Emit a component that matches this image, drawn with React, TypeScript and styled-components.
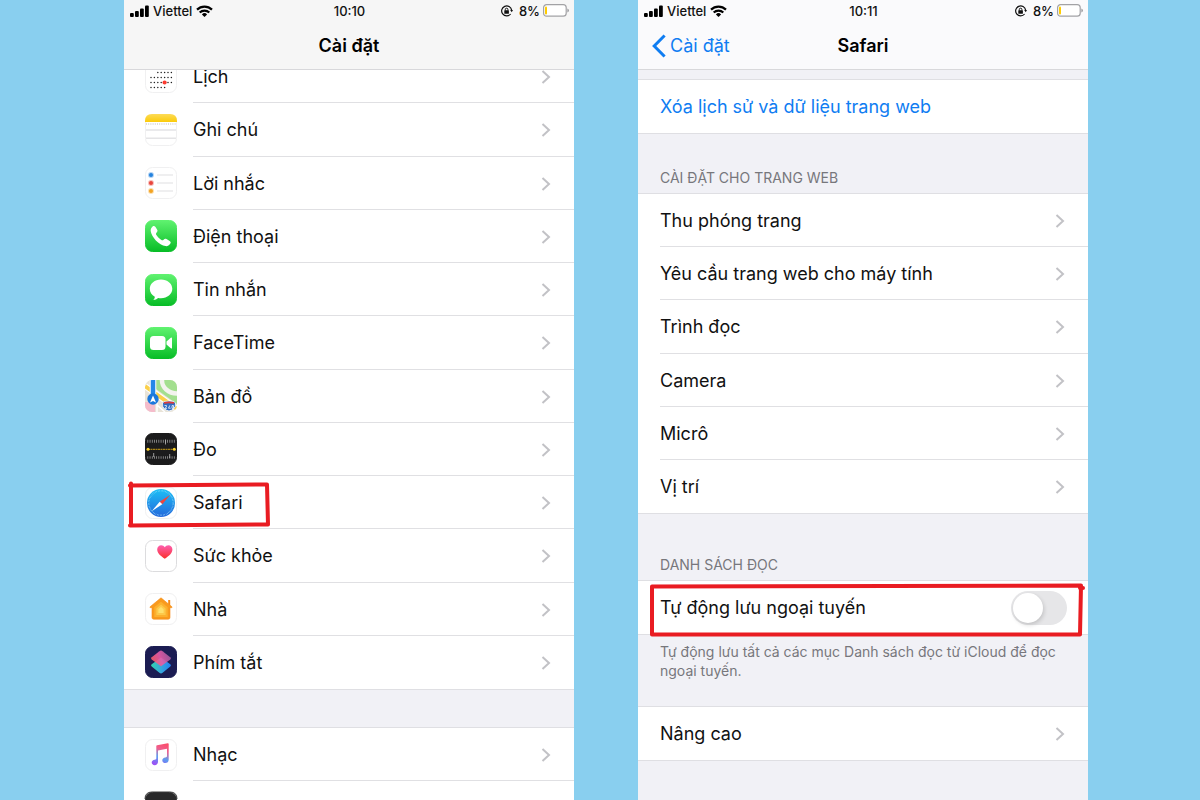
import React from 'react';
import styled, { createGlobalStyle } from 'styled-components';

const GlobalStyle = createGlobalStyle`
  *, *::before, *::after { box-sizing: border-box; }
  body {
    margin: 0;
    background: #89cfef;
    color: #111;
    font-family: Inter, Roboto, "Liberation Sans", sans-serif;
  }
  ul { list-style: none; margin: 0; padding: 0; }
  h1, h2, p { margin: 0; }
`;

const Stage = styled.main`
  display: flex;
  justify-content: center;
  gap: 64px;
  height: 100vh;
  padding-left: 12px;
  overflow: hidden;
`;

const Phone = styled.section`
  flex: 0 1 450px;
  min-width: 0;
  background: #f1f1f6;
  overflow: hidden;
`;

const Header = styled.header<{ $tint: string }>`
  position: relative;
  z-index: 1;
  background: ${(p) => p.$tint};
  border-bottom: 1px solid #d8d8db;
`;

const StatusBar = styled.div`
  display: grid;
  grid-template-columns: 1fr auto 1fr;
  align-items: center;
  height: 21px;
  padding: 0 5px 0 6px;
  font-size: 13px;
  font-weight: 500;
  line-height: 20px;
`;

const StatusSide = styled.div<{ $end?: boolean }>`
  display: flex;
  align-items: center;
  justify-content: ${(p) => (p.$end ? 'flex-end' : 'flex-start')};
  gap: ${(p) => (p.$end ? 3 : 4)}px;
`;

const Charge = styled.span`
  padding-left: 3px;
`;

const NavBar = styled.div`
  display: grid;
  grid-template-columns: 1fr auto 1fr;
  align-items: center;
  height: 48px;
  padding: 2px 14px 0;
`;

const Title = styled.h1`
  grid-column: 2;
  font-size: 18px;
  font-weight: 600;
  line-height: 24px;
  color: #000;
`;

const BackButton = styled.button`
  display: flex;
  align-items: center;
  justify-self: start;
  gap: 4px;
  padding: 0;
  border: 0;
  background: none;
  color: #0f7df2;
  font: inherit;
  font-size: 18px;
  line-height: 24px;
`;

const Group = styled.ul<{ $gap?: number; $height?: number }>`
  display: grid;
  grid-auto-rows: minmax(53px, 1fr);
  margin-top: ${(p) => p.$gap ?? 0}px;
  min-height: ${(p) => p.$height ?? 0}px;
  background: #fff;
  border: solid #dfdfe3;
  border-width: 1px 0;
`;

const Item = styled.li`
  position: relative;
  display: flex;
`;

const RowLink = styled.a<{ $accent?: boolean; $icon?: boolean }>`
  flex: 1;
  display: flex;
  align-items: center;
  gap: 16px;
  padding-left: ${(p) => (p.$icon ? 21 : 22)}px;
  min-width: 0;
  color: ${(p) => (p.$accent ? '#0f7df2' : '#111')};
  font-size: 18px;
  line-height: 24px;
  text-decoration: none;
`;

const RowBody = styled.span`
  flex: 1;
  align-self: stretch;
  display: flex;
  align-items: center;
  justify-content: space-between;
  padding: 2px 23px 0 0;
  border-bottom: 1px solid #e0e0e3;
  ${Item}:last-child & { border-bottom-color: transparent; }
`;

const SwitchRow = styled.label`
  flex: 1;
  display: flex;
  align-items: center;
  justify-content: space-between;
  padding: 0 21px 0 22px;
  font-size: 18px;
  line-height: 24px;
`;

const Switch = styled.input`
  appearance: none;
  width: 56px;
  height: 34px;
  margin: 0;
  padding: 2px;
  border-radius: 17px;
  background: #e6e6e8;
  &::before {
    content: "";
    display: block;
    width: 30px;
    height: 30px;
    border-radius: 50%;
    background: #fff;
    box-shadow: 1px 2px 4px rgba(0, 0, 0, 0.16);
  }
  &:checked { background: #34c759; }
  &:checked::before { margin-left: 22px; }
`;

const SectionLabel = styled.h2<{ $space: number }>`
  padding: ${(p) => p.$space}px 22px 5px;
  color: #77777c;
  font-size: 14px;
  font-weight: 400;
  line-height: 20px;
`;

const Footnote = styled.p`
  padding: 7px 30px 26px 22px;
  color: #77777c;
  font-size: 14px;
  line-height: 19px;
`;

const MarkSvg = styled.svg<{ $wide?: boolean }>`
  position: absolute;
  z-index: 1;
  left: ${(p) => (p.$wide ? 10 : 3)}px;
  top: ${(p) => (p.$wide ? 1 : 5)}px;
  width: ${(p) => (p.$wide ? 'calc(100% - 12px)' : '144px')};
  height: ${(p) => (p.$wide ? 56 : 48)}px;
  pointer-events: none;
`;

const AppIcon = styled.svg`
  flex: none;
  width: 32px;
  height: 32px;
  overflow: visible;
`;

const Glyph = styled.svg`
  flex: none;
  display: block;
`;

const Chevron = () => (
  <Glyph width="10" height="14" viewBox="0 0 10 14" fill="none" stroke="#c2c2c6" strokeWidth="2" aria-hidden="true">
    <path d="M1.5 1l6.5 6-6.5 6" />
  </Glyph>
);

const Signal = () => (
  <Glyph width="19" height="12" viewBox="0 0 19 12" aria-hidden="true">
    <rect x="0" y="8" width="3.8" height="4" rx="1" />
    <rect x="5" y="6" width="3.8" height="6" rx="1" />
    <rect x="10" y="3.5" width="3.8" height="8.5" rx="1" />
    <rect x="15" y="0.5" width="3.8" height="11.5" rx="1" />
  </Glyph>
);

const Wifi = () => (
  <Glyph width="17" height="12" viewBox="0 0 17 12" fill="none" stroke="#000" strokeWidth="2.2" aria-hidden="true">
    <path d="M1 4.6a10.8 10.8 0 0 1 15 0" />
    <path d="M3.7 7.5a6.9 6.9 0 0 1 9.6 0" />
    <path d="M8.5 12l-2.6-2.6a3.7 3.7 0 0 1 5.2 0z" fill="#000" stroke="none" />
  </Glyph>
);

const RotationLock = () => (
  <Glyph width="12" height="12" viewBox="0 0 12 12" aria-hidden="true">
    <path d="M10.6 5.2a5 5 0 1 0-1 3.8" fill="none" stroke="#111" strokeWidth="1.2" />
    <path d="M9.2 5h2.8l-1.3 2.2z" fill="#111" />
    <rect x="3.3" y="5.3" width="4.6" height="3.4" rx=".5" fill="#111" />
    <path d="M4.3 5.5v-1a1.3 1.3 0 0 1 2.6 0v1" fill="none" stroke="#111" />
  </Glyph>
);

const Battery = () => (
  <Glyph width="26" height="13" viewBox="0 0 26 13" aria-hidden="true">
    <rect x=".6" y=".6" width="22.6" height="11.6" rx="3" fill="#fff" stroke="#a2a2a5" strokeWidth="1.2" />
    <rect x="2" y="2.4" width="2" height="8" rx="1" fill="#fc0" />
    <path d="M24.4 4.4q1.5.6 1.5 2t-1.5 2z" fill="#98989c" />
  </Glyph>
);

const BackArrow = () => (
  <Glyph width="14" height="24" viewBox="0 0 14 24" fill="none" stroke="#0f7df2" strokeWidth="3" aria-hidden="true">
    <path d="M12.6 1.5L2.2 12l10.4 10.5" />
  </Glyph>
);

type Kind =
  | 'calendar' | 'notes' | 'reminders' | 'phone' | 'messages' | 'facetime' | 'maps'
  | 'measure' | 'safari' | 'health' | 'home' | 'shortcuts' | 'music' | 'tv';

const FILLS: Partial<Record<Kind, string>> = {
  phone: 'url(#green)',
  messages: 'url(#green)',
  facetime: 'url(#green)',
  measure: '#1b1b1c',
  shortcuts: '#1b1c52',
  tv: '#29292a',
};

const Tile = ({ kind }: { kind: Kind }) => {
  const fill = FILLS[kind];
  return (
    <rect
      x=".5" y=".5" width="31" height="31" rx="7"
      fill={fill ?? '#fff'}
      stroke={fill ?? (kind === 'health' ? '#dcdcde' : '#f0f0f1')}
    />
  );
};

// First and last day column of each week line in the calendar icon.
const weeks = [[2, 6], [0, 6], [0, 6], [0, 4]];
const days = weeks.flatMap(([from, to], line) =>
  Array.from({ length: to - from + 1 }, (_, i) => [6 + (from + i) * 3.4, 11.5 + line * 5]),
);

const art: Record<Kind, React.ReactNode> = {
  calendar: (
    <>
      {days.map(([x, y]) => <circle key={`${x}-${y}`} cx={x} cy={y} r=".75" fill="#222" />)}
      <circle cx="19.6" cy="21.5" r="2.1" fill="#fb3b30" />
    </>
  ),
  notes: (
    <>
      <path d="M0 8V7q0-7 7-7h18q7 0 7 7v1z" fill="url(#yellow)" />
      <path d="M1 10h30" stroke="#b9b9bb" strokeDasharray="1 1.2" />
      <path d="M1 16h30M1 24.3h30" stroke="#e4e4e6" strokeWidth="1.5" />
    </>
  ),
  reminders: (
    <>
      {[['#2482de', 8], ['#e8453c', 16], ['#f3a321', 24]].map(([c, y]) => (
        <g key={c as string}>
          <circle cx="6" cy={y} r="3" fill={c as string} opacity=".35" />
          <circle cx="6" cy={y} r="2" fill={c as string} />
          <path d={`M12 ${y}h16`} stroke="#e4e4e6" strokeWidth="1.2" />
        </g>
      ))}
    </>
  ),
  phone: (
    <path
      fill="#fff"
      d="M7.6 6.4c1.1-.9 2.100-.5 2.900.6l1.700 2.700c.7 1.200.2 2-.9 3.200-.6.600-.3 1.400.3 2.300 1.100 1.600 2.700 3.300 4.500 4.500.9.600 1.600.8 2.200.2 1.200-1.200 2-1.600 3.200-.9l3.200 2c1.200.8 1.300 1.800.5 2.800-1.200 1.600-2.700 2.600-4.700 2.300-3-.5-6.800-2.700-9.700-5.700-2.700-2.900-4.700-6.200-5.100-9.300-.2-2.100.6-3.500 1.900-4.700z"
    />
  ),
  messages: (
    <path
      fill="#fff"
      d="M16 5.500c6.300 0 11.300 4 11.300 9.300S22.300 24.200 16 24.200c-1 0-2-.1-2.900-.3-1.200 1.200-2.900 1.900-4.800 2 .9-.9 1.500-2 1.500-3.200-3-1.600-5-4.500-5-7.900C4.800 9.500 9.700 5.500 16 5.500z"
    />
  ),
  facetime: (
    <>
      <rect x="5" y="9" width="15.5" height="14" rx="3.5" fill="#fff" />
      <path d="M21.500 14.400l4.300-3.700q1.200-.8 1.200.6v9.400q0 1.400-1.200.6l-4.300-3.700z" fill="#fff" />
    </>
  ),
  maps: (
    <g clipPath="url(#tile)">
      <rect width="32" height="32" fill="#e9e4d8" />
      <path d="M11 0h21v24L11 9z" fill="#a3df8f" />
      <path d="M17 0a15 13 0 0 0 15 13.500" fill="none" stroke="#f3f3ee" strokeWidth="4.5" />
      <path d="M0 22h10v10H0z" fill="#f5bccb" />
      <path d="M0 6l32 23" stroke="#fff" strokeWidth="6" />
      <path d="M0 6l32 23" stroke="#fbd04b" strokeWidth="4" />
      <path d="M12 19v13M12 25l8 7" stroke="#fff" strokeWidth="1.5" />
      <path d="M8 0v18" stroke="#fff" strokeWidth="6.5" />
      <path d="M8 0v18" stroke="#2487e8" strokeWidth="4.5" />
      <circle cx="8" cy="19" r="5.7" fill="#1b78dc" />
      <path d="M8 15.500l3 7-3-1.500-3 1.500z" fill="#fff" />
      <path d="M19 21.500q5-1 10 0 .6 1 1.500 1.500.5 4-2 6-2 1.500-4.500 2-2.500-.5-4.500-2-2.500-2-2-6 1-.5 1.500-1.500z" fill="#2e6bc0" stroke="#fff" strokeWidth=".8" />
      <path d="M19 22.800q5-1 10 0" stroke="#dd3b39" strokeWidth="1.800" fill="none" />
      <path d="M19.500 25.600h2q.6 1.200-1.600 2.800h2M24.800 25.400l-1.300 2.800h2.200M27 25.600h1.500v2.800H27z" stroke="#fff" strokeWidth=".8" fill="none" />
    </g>
  ),
  measure: (
    <>
      <path d="M2.500 8.300h27.500" stroke="#aaa" strokeWidth="3" strokeDasharray=".7 1.5" />
      <path d="M2.500 24.600h27.500" stroke="#aaa" strokeWidth="2.5" strokeDasharray=".7 1.5" />
      <path d="M8.700 20v4M20.500 6.500v5M24.700 21v4" stroke="#bbb" strokeWidth=".8" />
      <path d="M3 16.300h26" stroke="#c99b14" strokeDasharray="2 .5" />
      <circle cx="3" cy="16.300" r="1.500" fill="#ffd52c" />
      <circle cx="29.300" cy="16.300" r="1.500" fill="#ffd52c" />
    </>
  ),
  safari: (
    <>
      <circle cx="16" cy="16" r="14" fill="url(#blue)" />
      <circle cx="16" cy="16" r="12.2" fill="none" stroke="#9bdcfa" strokeWidth="1.200" strokeDasharray=".5 1" />
      <path d="M25.300 7.800L17.300 17.300 14.700 14.700z" fill="#f0443c" />
      <path d="M6.700 24.200L14.700 14.700l2.600 2.600z" fill="#fff" />
    </>
  ),
  health: (
    <path
      d="M19.800 18.800c-4.300-3-7.600-5.600-7.600-9.300 0-2.600 1.800-4.300 4-4.300 1.500 0 2.900.8 3.600 2.100.7-1.300 2.100-2.100 3.600-2.100 2.200 0 4 1.700 4 4.300 0 3.700-3.300 6.300-7.600 9.300z"
      fill="url(#pink)"
    />
  ),
  home: (
    <>
      <path d="M23.200 7h2v6h-2z" fill="#f58a16" />
      <path d="M16 4.800L27.200 14l-1 1-1.200-.6V24.500q0 1.700-1.700 1.700H8.700Q7 26.200 7 24.500V14.400l-1.200.6-1-1z" fill="#f99a1d" stroke="#f68b17" strokeWidth=".6" strokeLinejoin="round" />
      <path d="M16 8.800l6.700 5.500V24H9.300v-9.700z" fill="#fcb02e" />
      <path d="M16 11.500l4.600 4V22h-9.200v-6.500z" fill="#fdc84a" />
      <path d="M16 14l2.600 2.300V20h-5.200v-3.700z" fill="#fee06d" />
    </>
  ),
  shortcuts: (
    <>
      <path d="M16 11.500l9.300 6.800q1.400 1.100 0 2.200l-7.700 6.300q-1.600 1.200-3.200 0l-7.700-6.300q-1.400-1.100 0-2.200z" fill="url(#teal)" />
      <path d="M17.600 5.200l7.700 6q1.400 1.100 0 2.200L16 20.300l-9.300-6.900q-1.400-1.100 0-2.200l7.700-6q1.600-1.200 3.200 0z" fill="url(#coral)" opacity=".9" />
    </>
  ),
  music: (
    <path
      d="M11.300 7.200q0-.8.800-1l10.600-1.900q1-.1 1 .8v15.300c0 2.200-1.400 3.600-3.400 3.600-1.800 0-3-1.100-3-2.600 0-1.700 1.200-2.600 3-2.900 1.300-.2 1.700-.6 1.700-1.500V9.800l-9 1.700v11.200c0 2.200-1.400 3.500-3.300 3.500-1.800 0-3-1.100-3-2.600 0-1.700 1.200-2.600 3-2.900 1.200-.2 1.600-.6 1.600-1.500z"
      fill="url(#melody)"
    />
  ),
  tv: <path d="M0 7q0-7 7-7h18q7 0 7 7" fill="none" stroke="#3a3a3b" />,
};

const DefsSvg = styled.svg`
  position: absolute;
  width: 0;
  height: 0;
`;

const Gradients = () => (
  <DefsSvg aria-hidden="true">
    <defs>
      <clipPath id="tile"><rect width="32" height="32" rx="7" /></clipPath>
      <linearGradient id="green" x2="0" y2="1"><stop stopColor="#5ff26f" /><stop offset="1" stopColor="#08bd27" /></linearGradient>
      <linearGradient id="yellow" x2="0" y2="1"><stop stopColor="#fddb57" /><stop offset="1" stopColor="#fbcb0a" /></linearGradient>
      <linearGradient id="blue" x2="0" y2="1"><stop stopColor="#1cc0f6" /><stop offset="1" stopColor="#2468db" /></linearGradient>
      <linearGradient id="pink" x2="0" y2="1"><stop stopColor="#fd5fb0" /><stop offset="1" stopColor="#fb2f2b" /></linearGradient>
      <linearGradient id="coral" x1="0" y1=".7" x2="1" y2=".4"><stop stopColor="#fb5d5e" /><stop offset=".5" stopColor="#e95ba8" /><stop offset="1" stopColor="#a35b9e" /></linearGradient>
      <linearGradient id="teal" x1="0" y1=".5" x2="1" y2=".5"><stop stopColor="#2fd3ae" /><stop offset=".5" stopColor="#37a7dc" /><stop offset="1" stopColor="#2281f2" /></linearGradient>
      <linearGradient id="melody" x1=".7" y1="0" x2=".4" y2="1"><stop stopColor="#fb4f6d" /><stop offset=".3" stopColor="#ef5f8e" /><stop offset=".65" stopColor="#5b9df0" /><stop offset="1" stopColor="#9a54f5" /></linearGradient>
    </defs>
  </DefsSvg>
);

const Mark = ({ wide }: { wide?: boolean }) => (
  <MarkSvg
    $wide={wide}
    viewBox={wide ? '0 0 438 56' : '0 0 144 48'}
    preserveAspectRatio="none"
    fill="none"
    stroke="#e91c22"
    strokeWidth="4"
    strokeLinecap="round"
    strokeLinejoin="round"
    aria-hidden="true"
  >
    {wide ? (
      <path d="M4 4.500L433 3.500L432 52.500L4 52.500ZM435 6h-3" />
    ) : (
      <path d="M4 2.500V44.500M3 4.500L140 3.500L141 43.500L3 44.500" />
    )}
  </MarkSvg>
);

const StatusLine = ({ time }: { time: string }) => (
  <StatusBar>
    <StatusSide>
      <Signal />
      <span>Viettel</span>
      <Wifi />
    </StatusSide>
    <time>{time}</time>
    <StatusSide $end>
      <RotationLock />
      <Charge>8%</Charge>
      <Battery />
    </StatusSide>
  </StatusBar>
);

const Row = ({ label, icon, marked }: { label: string; icon?: Kind; marked?: boolean }) => (
  <Item>
    <RowLink href="#" $icon={Boolean(icon)}>
      {icon && (
        <AppIcon viewBox="0 0 32 32" aria-hidden="true">
          <Tile kind={icon} />
          {art[icon]}
        </AppIcon>
      )}
      <RowBody>
        {label}
        <Chevron />
      </RowBody>
    </RowLink>
    {marked && <Mark />}
  </Item>
);

const apps: { label: string; icon: Kind }[] = [
  { label: 'Lịch', icon: 'calendar' },
  { label: 'Ghi chú', icon: 'notes' },
  { label: 'Lời nhắc', icon: 'reminders' },
  { label: 'Điện thoại', icon: 'phone' },
  { label: 'Tin nhắn', icon: 'messages' },
  { label: 'FaceTime', icon: 'facetime' },
  { label: 'Bản đồ', icon: 'maps' },
  { label: 'Đo', icon: 'measure' },
  { label: 'Safari', icon: 'safari' },
  { label: 'Sức khỏe', icon: 'health' },
  { label: 'Nhà', icon: 'home' },
  { label: 'Phím tắt', icon: 'shortcuts' },
];

const siteSettings = ['Thu phóng trang', 'Yêu cầu trang web cho máy tính', 'Trình đọc', 'Camera', 'Micrô', 'Vị trí'];

export default function App() {
  return (
    <>
      <GlobalStyle />
      <Gradients />
      <Stage>
        <Phone>
          <Header $tint="#f6f6f6">
            <StatusLine time="10:10" />
            <NavBar><Title>Cài đặt</Title></NavBar>
          </Header>
          <Group $gap={-21} $height={641}>
            {apps.map((app) => <Row key={app.icon} {...app} marked={app.icon === 'safari'} />)}
          </Group>
          <Group $gap={37}>
            <Row label="Nhạc" icon="music" />
            <Row label="" icon="tv" />
          </Group>
        </Phone>

        <Phone>
          <Header $tint="#fafafc">
            <StatusLine time="10:11" />
            <NavBar>
              <BackButton type="button"><BackArrow />Cài đặt</BackButton>
              <Title>Safari</Title>
            </NavBar>
          </Header>
          <Group $gap={9}>
            <Item><RowLink href="#" $accent>Xóa lịch sử và dữ liệu trang web</RowLink></Item>
          </Group>
          <SectionLabel $space={34}>CÀI ĐẶT CHO TRANG WEB</SectionLabel>
          <Group $height={321}>
            {siteSettings.map((label) => <Row key={label} label={label} />)}
          </Group>
          <SectionLabel $space={41}>DANH SÁCH ĐỌC</SectionLabel>
          <Group>
            <Item>
              <SwitchRow>
                Tự động lưu ngoại tuyến
                <Switch type="checkbox" role="switch" />
              </SwitchRow>
              <Mark wide />
            </Item>
          </Group>
          <Footnote>Tự động lưu tất cả các mục Danh sách đọc từ iCloud để đọc ngoại tuyến.</Footnote>
          <Group>
            <Row label="Nâng cao" />
          </Group>
        </Phone>
      </Stage>
    </>
  );
}
